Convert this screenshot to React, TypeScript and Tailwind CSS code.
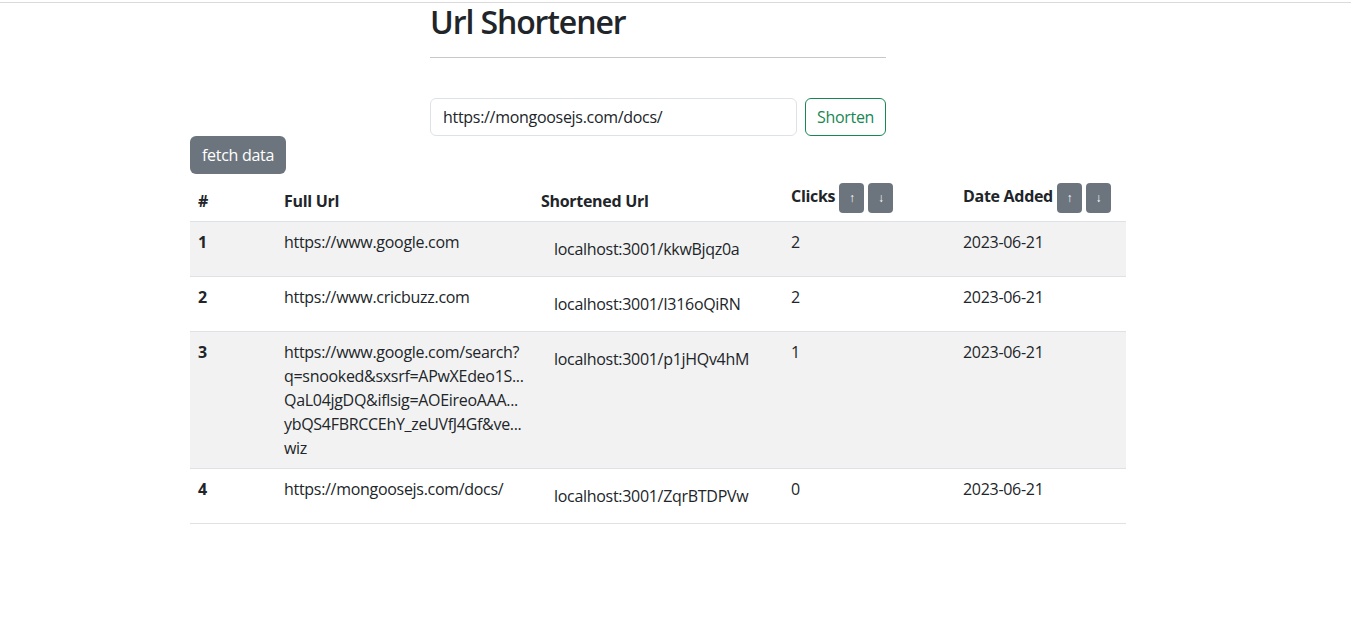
import React from 'react';

type Row = {
	id: number;
	full: string[];
	short: string;
	clicks: number;
	date: string;
};

const rows: Row[] = [
	{ id: 1, full: ['https://www.google.com'], short: 'localhost:3001/kkwBjqz0a', clicks: 2, date: '2023-06-21' },
	{ id: 2, full: ['https://www.cricbuzz.com'], short: 'localhost:3001/I316oQiRN', clicks: 2, date: '2023-06-21' },
	{
		id: 3,
		full: [
			'https://www.google.com/search?',
			'q=snooked&sxsrf=APwXEdeo1S...',
			'QaL04jgDQ&iflsig=AOEireoAAA...',
			'ybQS4FBRCCEhY_zeUVfJ4Gf&ve...',
			'wiz',
		],
		short: 'localhost:3001/p1jHQv4hM',
		clicks: 1,
		date: '2023-06-21',
	},
	{ id: 4, full: ['https://mongoosejs.com/docs/'], short: 'localhost:3001/ZqrBTDPVw', clicks: 0, date: '2023-06-21' },
];

function SortHeader({ label }: { label: string }) {
	return (
		<div className="flex items-baseline whitespace-nowrap">
			<span>{label}</span>
			<button className="ml-1 w-[25px] py-[6px] rounded bg-[#6c757d] text-white text-[12px] leading-[18px] font-normal">↑</button>
			<button className="ml-1 w-[25px] py-[6px] rounded bg-[#6c757d] text-white text-[12px] leading-[18px] font-normal">↓</button>
		</div>
	);
}

export default function App() {
	return (
		<div className="min-h-screen bg-white text-[#212529] text-base tracking-[-0.3px] font-['Open_Sans',sans-serif]">
			<div className="mt-[2px] h-px bg-[#dadada]" />
			<div className="w-[1316px] flex flex-col items-center">
				<div className="w-[456px]">
					<h2 className="text-[32px] leading-[38px] font-semibold tracking-[-1.1px] mb-4">Url Shortener</h2>
					<hr className="border-0 h-px bg-[#c8c8c8]" />
					<div className="flex gap-2 mt-10">
						<input
							className="flex-1 h-[38px] px-3 border border-[#dee2e6] rounded-md outline-none text-[#212529]"
							defaultValue="https://mongoosejs.com/docs/"
						/>
						<button className="w-[81px] h-[38px] border border-[#198754] text-[#198754] rounded-md">Shorten</button>
					</div>
				</div>
				<div className="w-[936px]">
					<button className="h-[38px] px-3 rounded-md bg-[#6c757d] text-white">fetch data</button>
					<table className="w-full table-fixed border-collapse mt-[1px]">
						<colgroup>
							<col className="w-[86px]" />
							<col className="w-[257px]" />
							<col className="w-[250px]" />
							<col className="w-[172px]" />
							<col className="w-[171px]" />
						</colgroup>
						<thead>
							<tr className="border-b border-[#dee2e6] text-left align-bottom">
								<th className="p-2 font-bold leading-6">#</th>
								<th className="p-2 font-bold leading-6">Full Url</th>
								<th className="p-2 font-bold leading-6">Shortened Url</th>
								<th className="p-2 font-bold leading-6">
									<SortHeader label="Clicks" />
								</th>
								<th className="p-2 font-bold leading-6">
									<SortHeader label="Date Added" />
								</th>
							</tr>
						</thead>
						<tbody>
							{rows.map((r, i) => (
								<tr
									key={r.id}
									className={`border-b border-[#dee2e6] align-top ${i % 2 === 0 ? 'bg-[#f2f2f2]' : 'bg-white'}`}
								>
									<th className="p-2 text-left font-bold leading-6">{r.id}</th>
									<td className="p-2 leading-6">
										{r.full.map((l) => (
											<div key={l} className="whitespace-nowrap">
												{l}
											</div>
										))}
									</td>
									<td className="p-2">
										<button className="px-3 py-[6px] leading-6 border border-transparent whitespace-nowrap">
											{r.short}
										</button>
									</td>
									<td className="p-2 leading-6">{r.clicks}</td>
									<td className="p-2 leading-6">{r.date}</td>
								</tr>
							))}
						</tbody>
					</table>
				</div>
			</div>
		</div>
	);
}
